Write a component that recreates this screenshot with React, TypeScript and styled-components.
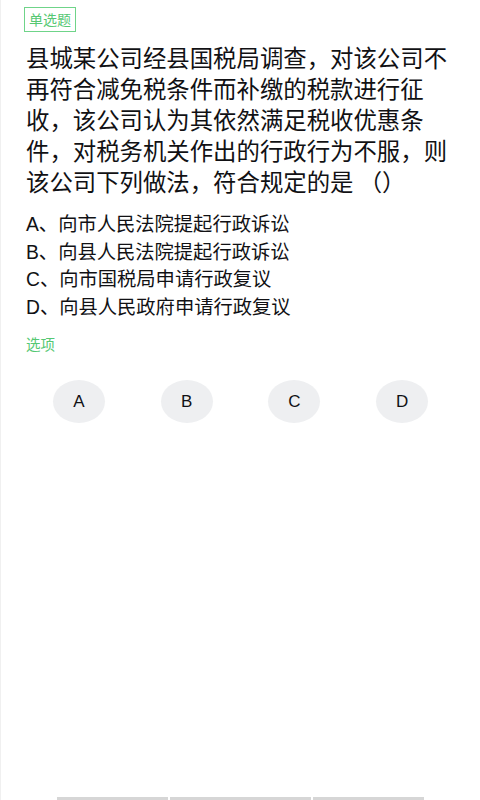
import styled, {createGlobalStyle} from "styled-components";

const GlobalStyle = createGlobalStyle`
  html, body {
    margin: 0;
    padding: 0;
    background: #ffffff;
  }
  body {
    font-family: "Liberation Sans", "Noto Sans CJK SC", sans-serif;
  }
`

const Page = styled.div`
  position: relative;
  width: 480px;
  height: 800px;
  box-sizing: border-box;
  border-left: 1px solid #f0f0f0;
  display: flex;
  flex-direction: column;
  overflow: hidden;
`

const Body = styled.div`
  flex: 1;
  padding: 7px 24px 0 23px;
  display: flex;
  flex-direction: column;
  align-items: flex-start;
`

const Tag = styled.span`
  box-sizing: border-box;
  height: 25px;
  padding: 0 4px;
  border: 1.5px solid #6fd489;
  color: #55c873;
  font-family: "Noto Sans CJK SC", sans-serif;
  font-size: 14px;
  line-height: 22px;
`

const Question = styled.p`
  margin: 10px 0 0 2px;
  width: 432px;
  color: #111114;
  font-family: "Noto Sans CJK SC", sans-serif;
  font-size: 23.4px;
  line-height: 31px;
  line-break: strict;
`

const Options = styled.div`
  margin-top: 14px;
  display: flex;
  flex-direction: column;
`

const Option = styled.div`
  color: #111114;
  font-size: 19.3px;
  line-height: 27.5px;
  margin-left: 2px;
`

const Label = styled.div`
  margin: 13px 0 0 2px;
  color: #55c873;
  font-family: "Noto Sans CJK SC", sans-serif;
  font-size: 14.5px;
  line-height: 20px;
`

const Choices = styled.div`
  margin-top: 26px;
  align-self: stretch;
  display: grid;
  grid-template-columns: repeat(4, 1fr);
  justify-items: center;
  padding-left: 1px;
`

const Choice = styled.button`
  width: 52px;
  height: 43px;
  border: none;
  border-radius: 50%;
  background: #eeeff1;
  color: #111114;
  font-family: "Liberation Sans", sans-serif;
  font-size: 17px;
  padding: 0;
`

const BottomBar = styled.div`
  height: 3px;
  padding: 0 56px;
  display: flex;
  gap: 2px;
`

const BarPiece = styled.div<{ grow: number }>`
  flex: ${p => p.grow};
  background: #d6d6d6;
`

const options = [
  'A、向市人民法院提起行政诉讼',
  'B、向县人民法院提起行政诉讼',
  'C、向市国税局申请行政复议',
  'D、向县人民政府申请行政复议',
]

const App = () => {
  return (
    <>
      <GlobalStyle />
      <Page>
        <Body>
          <Tag>单选题</Tag>
          <Question>
            县城某公司经县国税局调查，对该公司不再符合减免税条件而补缴的税款进行征收，该公司认为其依然满足税收优惠条件，对税务机关作出的行政行为不服，则该公司下列做法，符合规定的是 （）
          </Question>
          <Options>
            {options.map(o => <Option key={o}>{o}</Option>)}
          </Options>
          <Label>选项</Label>
          <Choices>
            {['A', 'B', 'C', 'D'].map(c => <Choice key={c}>{c}</Choice>)}
          </Choices>
        </Body>
        <BottomBar>
          <BarPiece grow={112} />
          <BarPiece grow={142} />
          <BarPiece grow={112} />
        </BottomBar>
      </Page>
    </>
  );
}

export default App;
